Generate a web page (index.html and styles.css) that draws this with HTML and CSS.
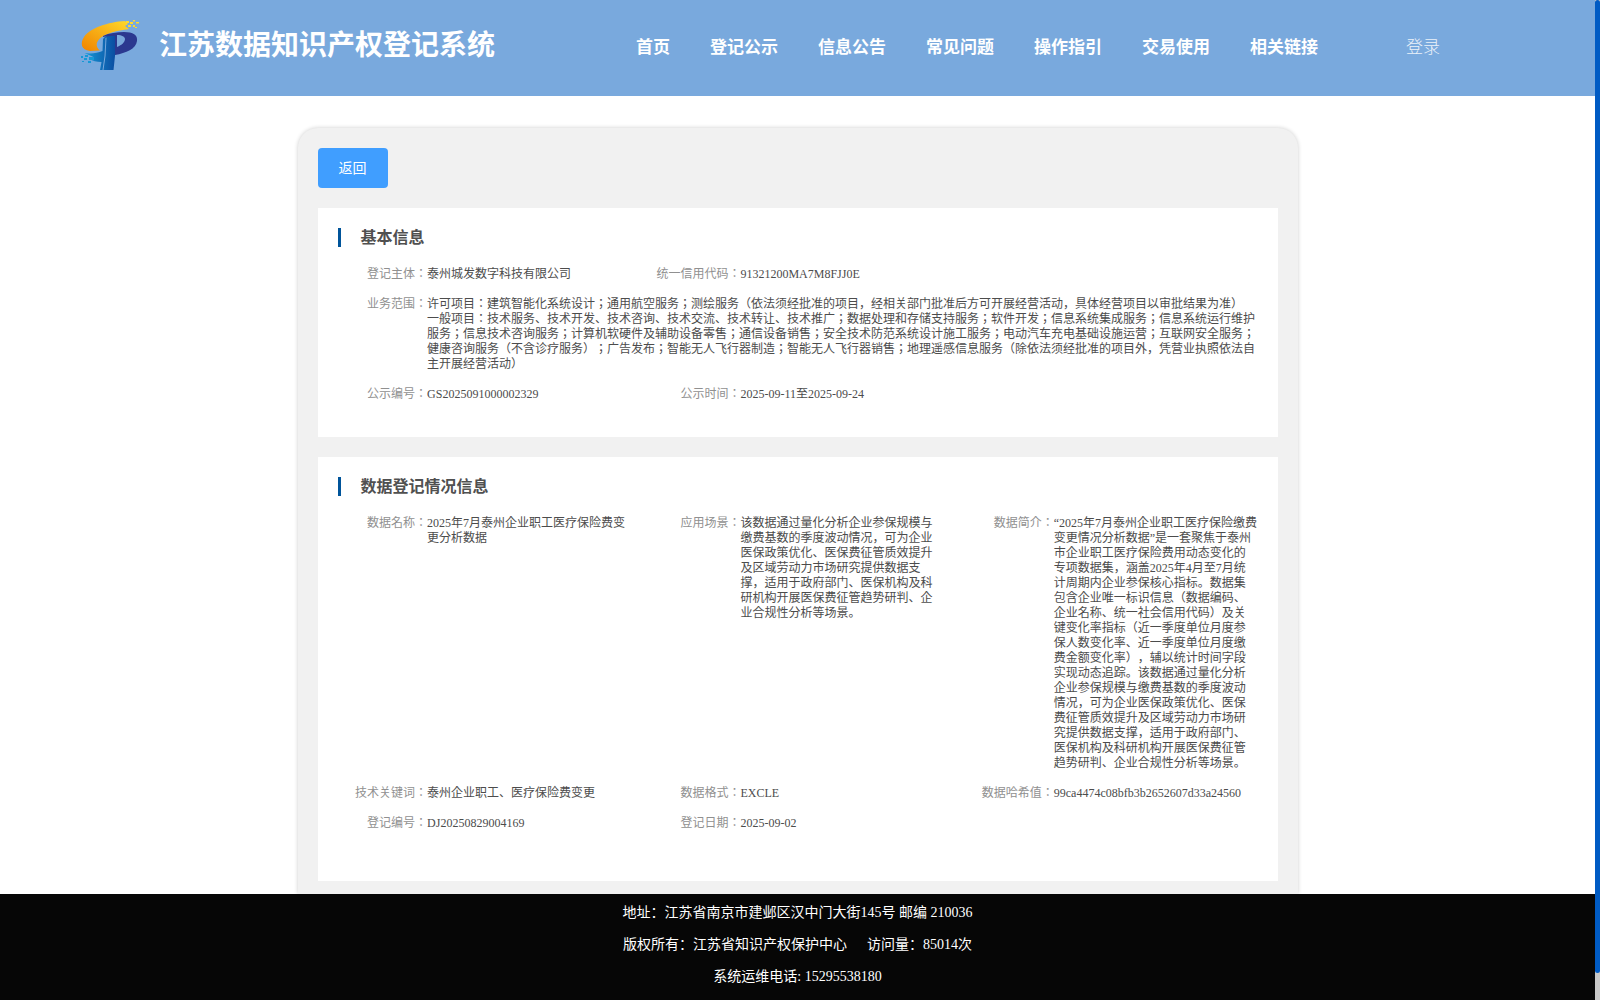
FILE: index.html
```html
<!DOCTYPE html>
<html>
<head>
  <meta charset="UTF-8">
  <meta name="viewport" content="width=device-width, initial-scale=1.0">
  <title>江苏数据知识产权登记系统</title>
  <link rel="stylesheet" href="styles.css">
</head>
<body>
  <div class="page">
    <header class="header">
      <svg class="logo" viewBox="0 0 60 52" width="60" height="52">
        <defs>
          <linearGradient id="gold" x1="0" y1="1" x2="1" y2="0">
            <stop offset="0" stop-color="#f08300"/>
            <stop offset="1" stop-color="#ffd92b"/>
          </linearGradient>
          <linearGradient id="blue" x1="0" y1="0" x2="1" y2="0">
            <stop offset="0" stop-color="#1799d6"/>
            <stop offset="1" stop-color="#0b4ea2"/>
          </linearGradient>
        </defs>
        <path fill="url(#gold)" d="M45 2C28 3 10 9 4 18c-4 6-3 13 6 14l10-.5c-5-4-4-9 1-13 6-4 15-7 28-8.500l-4-3 3-2z"/>
        <path fill="url(#blue)" d="M23 20c2-3 6-4 12-5v22l-1.500 14H20l1.500-8c-5 0-9-1-12-3l4-2-9-4c7 1 13 0 18-2z"/>
        <path fill="#2b3990" fill-rule="evenodd" d="M23 17c6-3 14-4 21-4 9 0 14 3 13 9-1 8-11 12-22 14v-7-12c-5 0-9 0-12 1zM37 28c5-2 8-5 8-8 0-2-3-4-8-4z"/>
        <path fill="#79a9dd" d="M25.500 19l1-.5L25.500 37 23.500 51h-1L24.500 37z"/>
        <path fill="#ffd92b" d="M46 2h3v2h-3zM50 3h3v2h-3zM53 1h2v1.500h-2zM48 6h3v2h-3zM53 6h2v2h-2zM56 3h3v1.500h-3zM55 8h2v1h-2z"/>
        <path fill="#1799d6" d="M1 37h2v2H1zM4 39h3v2H4zM5 36h3v2H5zM2 42h2v1H2zM8 42h3v2H8zM9 38h5v3H9z"/>
      </svg>
      <h1 class="site-name">江苏数据知识产权登记系统</h1>
      <nav class="nav">
        <a>首页</a>
        <a>登记公示</a>
        <a>信息公告</a>
        <a>常见问题</a>
        <a>操作指引</a>
        <a>交易使用</a>
        <a>相关链接</a>
      </nav>
      <a class="login">登录</a>
    </header>

    <main class="card">
      <button class="back">返回</button>

      <section class="panel basic">
        <h2>基本信息</h2>
        <div class="info">
          <div class="item"><label>登记主体：</label><span>泰州城发数字科技有限公司</span></div>
          <div class="item"><label>统一信用代码：</label><span>91321200MA7M8FJJ0E</span></div>
          <div class="item wide"><label>业务范围：</label><span>许可项目：建筑智能化系统设计；通用航空服务；测绘服务（依法须经批准的项目，经相关部门批准后方可开展经营活动，具体经营项目以审批结果为准）<br>一般项目：技术服务、技术开发、技术咨询、技术交流、技术转让、技术推广；数据处理和存储支持服务；软件开发；信息系统集成服务；信息系统运行维护服务；信息技术咨询服务；计算机软硬件及辅助设备零售；通信设备销售；安全技术防范系统设计施工服务；电动汽车充电基础设施运营；互联网安全服务；健康咨询服务（不含诊疗服务）；广告发布；智能无人飞行器制造；智能无人飞行器销售；地理遥感信息服务（除依法须经批准的项目外，凭营业执照依法自主开展经营活动）</span></div>
          <div class="item"><label>公示编号：</label><span>GS2025091000002329</span></div>
          <div class="item"><label>公示时间：</label><span>2025-09-11至2025-09-24</span></div>
        </div>
      </section>

      <section class="panel register">
        <h2>数据登记情况信息</h2>
        <div class="info">
          <div class="item"><label>数据名称：</label><span>2025年7月泰州企业职工医疗保险费变更分析数据</span></div>
          <div class="item"><label>应用场景：</label><span>该数据通过量化分析企业参保规模与缴费基数的季度波动情况，可为企业医保政策优化、医保费征管质效提升及区域劳动力市场研究提供数据支撑，适用于政府部门、医保机构及科研机构开展医保费征管趋势研判、企业合规性分析等场景。</span></div>
          <div class="item"><label>数据简介：</label><span>“2025年7月泰州企业职工医疗保险缴费变更情况分析数据”是一套聚焦于泰州市企业职工医疗保险费用动态变化的专项数据集，涵盖2025年4月至7月统计周期内企业参保核心指标。数据集包含企业唯一标识信息（数据编码、企业名称、统一社会信用代码）及关键变化率指标（近一季度单位月度参保人数变化率、近一季度单位月度缴费金额变化率），辅以统计时间字段实现动态追踪。该数据通过量化分析企业参保规模与缴费基数的季度波动情况，可为企业医保政策优化、医保费征管质效提升及区域劳动力市场研究提供数据支撑，适用于政府部门、医保机构及科研机构开展医保费征管趋势研判、企业合规性分析等场景。</span></div>
          <div class="item"><label>技术关键词：</label><span>泰州企业职工、医疗保险费变更</span></div>
          <div class="item"><label>数据格式：</label><span>EXCLE</span></div>
          <div class="item"><label>数据哈希值：</label><span>99ca4474c08bfb3b2652607d33a24560</span></div>
          <div class="item"><label>登记编号：</label><span>DJ20250829004169</span></div>
          <div class="item"><label>登记日期：</label><span>2025-09-02</span></div>
        </div>
      </section>
    </main>

    <footer class="footer">
      <p>地址：江苏省南京市建邺区汉中门大街145号 邮编 210036</p>
      <p>版权所有：江苏省知识产权保护中心<span class="visits">访问量：85014次</span></p>
      <p>系统运维电话: 15295538180</p>
    </footer>
  </div>
  <div class="scrollbar"><div class="thumb"></div></div>
</body>
</html>
```
FILE: styles.css
```css
* {
  box-sizing: border-box;
}

body {
  margin: 0;
  height: 1000px;
  display: flex;
  overflow: hidden;
  background: #fff;
  font-family: "Liberation Serif", "Noto Sans CJK SC", serif;
  text-spacing-trim: space-all;
}

.page {
  flex: 1;
  display: flex;
  flex-direction: column;
}

.header {
  height: 96px;
  flex-shrink: 0;
  display: flex;
  align-items: center;
  padding-left: 80px;
  background: #79a9dd;
  color: #fff;
}

.logo {
  margin-top: -6px;
}

.site-name {
  width: 336px;
  margin: -4px 0 0 19px;
  font-size: 28px;
  line-height: 40px;
  font-weight: 600;
  white-space: nowrap;
}

.nav {
  display: flex;
  gap: 40px;
  margin: 0 0 0 141px;
  font-size: 17px;
  line-height: 24px;
  font-weight: 600;
  white-space: nowrap;
}

.login {
  margin: 0 0 0 88px;
  font-size: 17px;
  line-height: 24px;
  font-weight: 300;
  opacity: 0.85;
}

.card {
  width: 1000px;
  height: 766px;
  margin: 32px auto 0;
  padding: 20px;
  background: #f1f1f1;
  border-radius: 20px 20px 0 0;
  box-shadow: 0 0 4px rgba(0, 0, 0, 0.2);
}

.back {
  display: block;
  width: 70px;
  height: 40px;
  padding: 0 0 2px;
  border: none;
  border-radius: 4px;
  background: #409eff;
  color: #fff;
  font-family: inherit;
  font-size: 14px;
}

.panel {
  margin-top: 20px;
  padding: 20px 20px 0 0;
  background: #fff;
}

.basic {
  height: 229px;
}

.register {
  height: 424px;
}

.panel h2 {
  height: 19px;
  margin: 0 0 20px 20px;
  padding-left: 20px;
  border-left: 3px solid #00549a;
  color: #505050;
  font-size: 16px;
  line-height: 20px;
}

.info {
  display: grid;
  grid-template-columns: repeat(3, 1fr);
  row-gap: 15px;
  font-family: "Liberation Serif", "Noto Sans CJK JP", serif;
  font-size: 12px;
  line-height: 15px;
  color: #4c4c4c;
}

.item {
  display: flex;
}

.item label {
  width: 109.6px;
  flex-shrink: 0;
  text-align: right;
  color: #909090;
}

.item span {
  flex: 1;
  min-width: 0;
}

.wide {
  grid-column: 1 / -1;
}

.footer {
  height: 106px;
  padding-top: 3px;
  background: #060606;
  color: #fff;
  font-size: 14px;
  line-height: 32px;
  text-align: center;
}

.footer p {
  margin: 0;
}

.visits {
  margin-left: 20px;
}

.scrollbar {
  width: 5px;
  background: #c8c8c8;
}

.thumb {
  height: 973px;
  border-radius: 3px;
  background: #005bc4;
}
```
